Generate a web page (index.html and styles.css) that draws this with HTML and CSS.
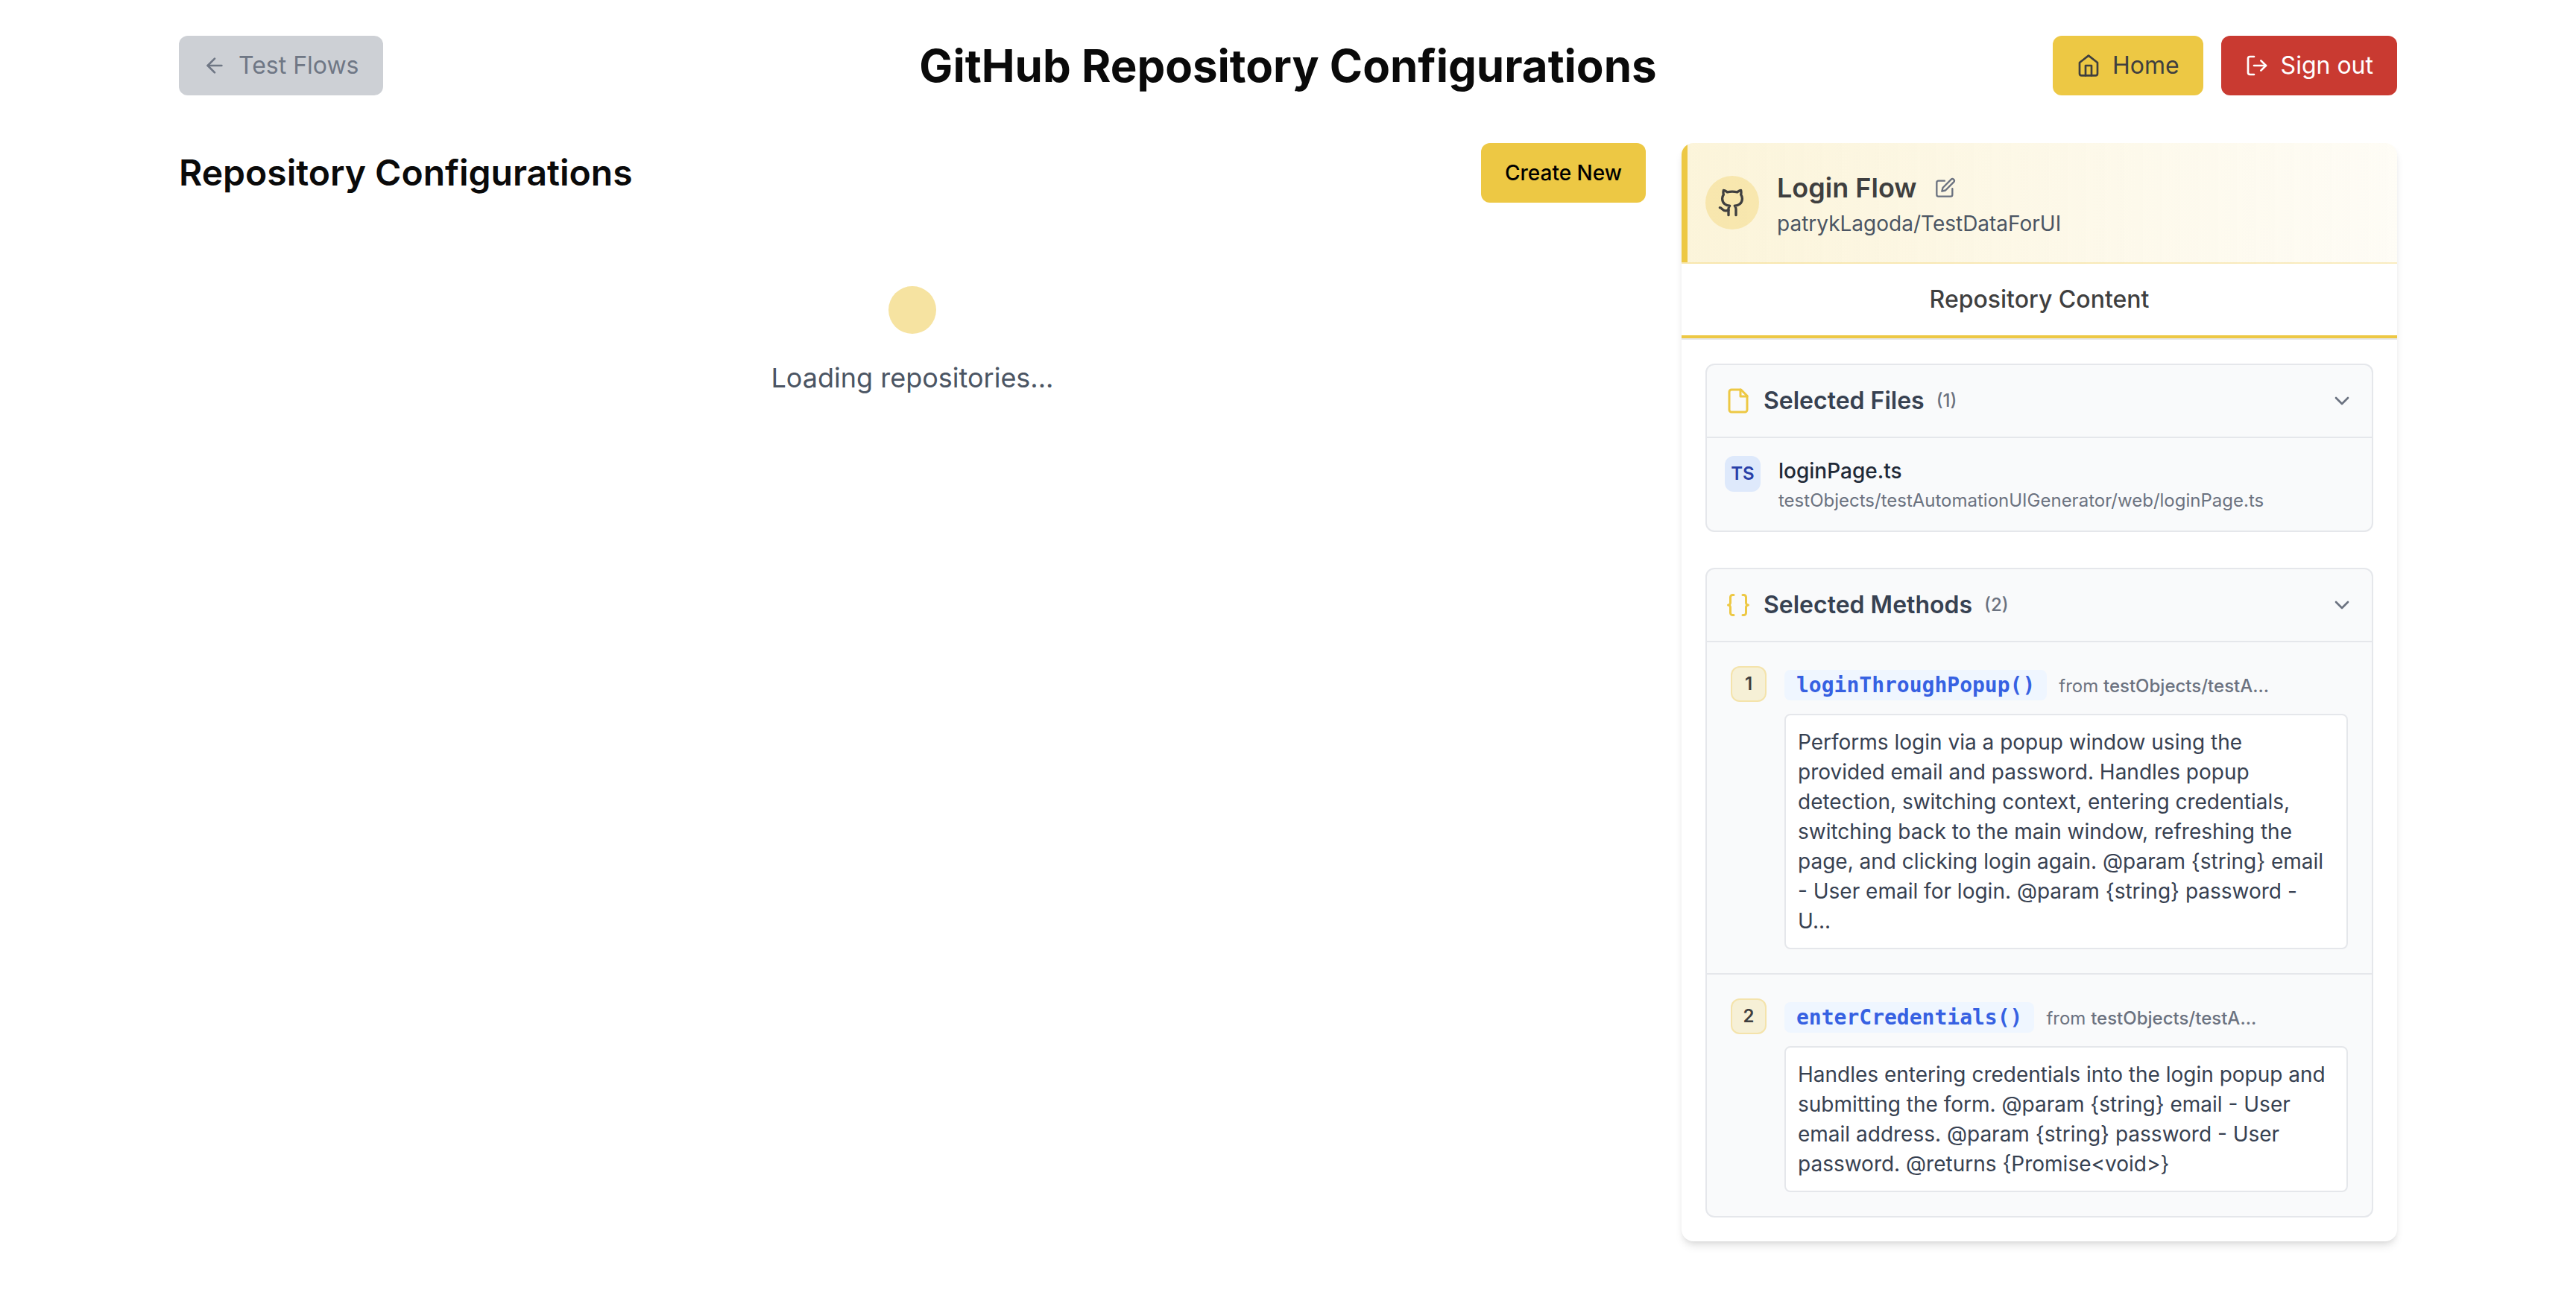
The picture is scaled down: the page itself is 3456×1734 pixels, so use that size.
FILE: index.html
```html
<!DOCTYPE html>
<html lang="en">
<head>
<meta charset="utf-8">
<meta name="viewport" content="width=device-width, initial-scale=1">
<title>GitHub Repository Configurations</title>
<link rel="stylesheet" href="styles.css">
</head>
<body>
<div class="page">
  <header class="topbar">
    <div class="topbar-side">
      <button class="btn btn-muted" type="button">
        <svg class="icon" viewBox="0 0 24 24" aria-hidden="true"><path d="m12 19-7-7 7-7"/><path d="M19 12H5"/></svg>
        Test Flows
      </button>
    </div>
    <h1 class="page-title">GitHub Repository Configurations</h1>
    <nav class="topbar-side topbar-end">
      <button class="btn btn-primary" type="button">
        <svg class="icon" viewBox="0 0 24 24" aria-hidden="true"><path d="m3 9 9-7 9 7v11a2 2 0 0 1-2 2H5a2 2 0 0 1-2-2z"/><path d="M9 22V12h6v10"/></svg>
        Home
      </button>
      <button class="btn btn-danger" type="button">
        <svg class="icon" viewBox="0 0 24 24" aria-hidden="true"><path d="M9 21H5a2 2 0 0 1-2-2V5a2 2 0 0 1 2-2h4"/><path d="m16 17 5-5-5-5"/><path d="M21 12H9"/></svg>
        Sign out
      </button>
    </nav>
  </header>

  <div class="columns">
    <main class="main">
      <div class="section-head">
        <h2 class="section-title">Repository Configurations</h2>
        <button class="btn btn-create" type="button">Create New</button>
      </div>
      <div class="loading" role="status">
        <span class="loading-dot"></span>
        <p class="loading-text">Loading repositories...</p>
      </div>
    </main>

    <aside class="panel">
      <div class="panel-head">
        <div class="panel-head-inner">
          <span class="avatar">
            <svg class="icon icon-xl" viewBox="0 0 24 24" aria-hidden="true"><path d="M15 22v-4a4.8 4.8 0 0 0-1-3.500c3 0 6-2 6-5.500.08-1.250-.27-2.480-1-3.500.28-1.150.28-2.350 0-3.500 0 0-1 0-3 1.500-2.640-.5-5.360-.5-8 0C6 2 5 2 5 2c-.3 1.150-.3 2.350 0 3.500A5.403 5.403 0 0 0 4 9c0 3.500 3 5.500 6 5.500-.39.49-.68 1.050-.85 1.650-.17.6-.22 1.230-.15 1.850v4"/><path d="M9 18c-4.510 2-5-2-7-2"/></svg>
          </span>
          <div>
            <div class="flow-line">
              <h3 class="flow-name">Login Flow</h3>
              <button class="icon-btn" type="button" aria-label="Edit name">
                <svg class="icon icon-sm" viewBox="0 0 24 24" aria-hidden="true"><path d="M11 4H4a2 2 0 0 0-2 2v14a2 2 0 0 0 2 2h14a2 2 0 0 0 2-2v-7"/><path d="M18.500 2.500a2.121 2.121 0 0 1 3 3L12 15l-4 1 1-4 9.500-9.500z"/></svg>
              </button>
            </div>
            <p class="repo-name">patrykLagoda/TestDataForUI</p>
          </div>
        </div>
      </div>

      <div class="tabs">
        <button class="tab" type="button">Repository Content</button>
      </div>

      <div class="panel-body">
        <section class="card">
          <button class="card-head" type="button" aria-expanded="true">
            <svg class="icon icon-lg accent" viewBox="0 0 24 24" aria-hidden="true"><path d="M14.500 2H6a2 2 0 0 0-2 2v16a2 2 0 0 0 2 2h12a2 2 0 0 0 2-2V7.500L14.500 2z"/><path d="M14 2v6h6"/></svg>
            <span class="card-title">Selected Files</span>
            <span class="card-count">(1)</span>
            <svg class="icon chevron" viewBox="0 0 24 24" aria-hidden="true"><path d="m6 9 6 6 6-6"/></svg>
          </button>
          <div class="file">
            <span class="file-type">TS</span>
            <div>
              <p class="file-name">loginPage.ts</p>
              <p class="file-path">testObjects/testAutomationUIGenerator/web/loginPage.ts</p>
            </div>
          </div>
        </section>

        <section class="card">
          <button class="card-head" type="button" aria-expanded="true">
            <svg class="icon icon-lg accent" viewBox="0 0 24 24" aria-hidden="true"><path d="M8 3H7a2 2 0 0 0-2 2v5a2 2 0 0 1-2 2 2 2 0 0 1 2 2v5c0 1.100.9 2 2 2h1"/><path d="M16 21h1a2 2 0 0 0 2-2v-5c0-1.100.9-2 2-2a2 2 0 0 1-2-2V5a2 2 0 0 0-2-2h-1"/></svg>
            <span class="card-title">Selected Methods</span>
            <span class="card-count">(2)</span>
            <svg class="icon chevron" viewBox="0 0 24 24" aria-hidden="true"><path d="m6 9 6 6 6-6"/></svg>
          </button>
          <div class="method">
            <span class="method-index">1</span>
            <div class="method-main">
              <p class="method-line"><code class="method-name">loginThroughPopup()</code><span class="method-source">from <b>testObjects/testA...</b></span></p>
              <p class="method-text">Performs login via a popup window using the provided email and password. Handles popup detection, switching context, entering credentials, switching back to the main window, refreshing the page, and clicking login again. @param {string} email - User email for login. @param {string} password - U...</p>
            </div>
          </div>
          <div class="method">
            <span class="method-index">2</span>
            <div class="method-main">
              <p class="method-line"><code class="method-name">enterCredentials()</code><span class="method-source">from <b>testObjects/testA...</b></span></p>
              <p class="method-text">Handles entering credentials into the login popup and submitting the form. @param {string} email - User email address. @param {string} password - User password. @returns {Promise&lt;void&gt;}</p>
            </div>
          </div>
        </section>
      </div>
    </aside>
  </div>
</div>
</body>
</html>
```
FILE: styles.css
```css
:root {
  --yellow: #edc844;
  --yellow-50: #f6e3a1;
  --ink: #3f3f3f;
  --line: #e5e7eb;
  --gray-500: #6b7280;
  --gray-600: #4b5563;
  --gray-700: #374151;
}

* {
  box-sizing: border-box;
}

body {
  margin: 0;
  background: #fff;
  color: #0a0a0a;
  font-family: Inter, "Liberation Sans", sans-serif;
  font-size: 32px;
  line-height: 48px;
}

h1, h2, h3, p {
  margin: 0;
}

button {
  margin: 0;
  border: 0;
  background: none;
  color: inherit;
  font: inherit;
  cursor: pointer;
}

.page {
  max-width: 3072px;
  margin: 0 auto;
  padding: 48px;
}

/* Icons */
.icon {
  flex: none;
  width: 32px;
  height: 32px;
  fill: none;
  stroke: currentColor;
  stroke-width: 2;
  stroke-linecap: round;
  stroke-linejoin: round;
}

.icon-sm {
  width: 28px;
  height: 28px;
}

.icon-lg {
  width: 36px;
  height: 36px;
}

.icon-xl {
  width: 40px;
  height: 40px;
}

.accent {
  color: var(--yellow);
}

/* Top bar */
.topbar {
  display: grid;
  grid-template-columns: 1fr auto 1fr;
  align-items: center;
  margin-bottom: 64px;
}

.topbar-side {
  display: flex;
  gap: 24px;
}

.topbar-end {
  justify-content: flex-end;
}

.page-title {
  font-size: 60px;
  line-height: 72px;
  font-weight: 700;
}

.btn {
  display: flex;
  align-items: center;
  gap: 16px;
  padding: 16px 32px;
  border-radius: 12px;
}

.btn-muted {
  background: #cdd0d5;
  color: #6f7785;
}

.btn-primary {
  background: var(--yellow);
  color: var(--ink);
}

.btn-danger {
  background: #c93a31;
  color: #fff;
}

.btn-create {
  padding: 20px 32px;
  background: var(--yellow);
  color: #000;
  font-size: 28px;
  line-height: 40px;
  font-weight: 500;
}

/* Columns */
.columns {
  display: grid;
  grid-template-columns: repeat(3, minmax(0, 1fr));
  align-items: start;
  gap: 48px;
}

.main {
  grid-column: span 2;
}

.section-head {
  display: flex;
  align-items: center;
  justify-content: space-between;
  margin-bottom: 48px;
}

.section-title {
  font-size: 48px;
  line-height: 64px;
  font-weight: 600;
}

.loading {
  display: flex;
  flex-direction: column;
  align-items: center;
  gap: 32px;
  padding: 64px 0;
}

.loading-dot {
  width: 64px;
  height: 64px;
  border-radius: 50%;
  background: var(--yellow-50);
}

.loading-text {
  color: var(--gray-600);
  font-size: 36px;
  line-height: 54px;
}

/* Side panel */
.panel {
  overflow: hidden;
  border-radius: 16px;
  background: #fff;
  box-shadow: 0 8px 12px -2px rgba(0, 0, 0, 0.1), 0 4px 8px -4px rgba(0, 0, 0, 0.1);
}

.panel-head {
  border-bottom: 2px solid rgba(237, 200, 68, 0.3);
  background: linear-gradient(to right, rgba(237, 200, 68, 0.2), rgba(237, 200, 68, 0.05));
}

.panel-head-inner {
  display: flex;
  align-items: center;
  gap: 24px;
  padding: 32px 32px 32px 24px;
  border-left: 8px solid var(--yellow);
}

.avatar {
  display: flex;
  flex: none;
  align-items: center;
  justify-content: center;
  width: 72px;
  height: 72px;
  border-radius: 50%;
  background: rgba(237, 200, 68, 0.3);
  color: var(--ink);
}

.flow-line {
  display: flex;
  align-items: center;
  gap: 16px;
}

.flow-name {
  color: var(--ink);
  font-size: 36px;
  line-height: 56px;
  font-weight: 600;
}

.icon-btn {
  display: flex;
  padding: 8px;
  color: var(--gray-500);
}

.repo-name {
  color: var(--gray-600);
  font-size: 28px;
  line-height: 40px;
}

.tabs {
  display: flex;
  border-bottom: 2px solid var(--line);
}

.tab {
  flex: 1;
  padding: 24px 32px;
  border-bottom: 4px solid var(--yellow);
  color: var(--ink);
  font-weight: 500;
}

.panel-body {
  display: flex;
  flex-direction: column;
  gap: 48px;
  padding: 32px;
}

/* Cards */
.card {
  overflow: hidden;
  border: 2px solid var(--line);
  border-radius: 12px;
  background: #f9fafb;
}

.card-head {
  display: flex;
  align-items: center;
  gap: 16px;
  width: 100%;
  padding: 24px;
}

.card-title {
  color: var(--gray-700);
  font-weight: 600;
}

.card-count {
  color: var(--gray-500);
  font-size: 24px;
  line-height: 32px;
  font-weight: 500;
}

.chevron {
  margin-left: auto;
  color: var(--gray-500);
}

.file {
  display: flex;
  gap: 24px;
  padding: 24px;
  border-top: 2px solid var(--line);
}

.file-type {
  flex: none;
  width: 48px;
  height: 48px;
  border-radius: 12px;
  background: #dee9fb;
  color: #2840a8;
  font-size: 24px;
  font-weight: 600;
  text-align: center;
}

.file-name {
  margin-bottom: 4px;
  color: #1f2937;
  font-size: 28px;
  line-height: 40px;
  font-weight: 500;
}

.file-path {
  color: var(--gray-500);
  font-size: 24px;
  line-height: 32px;
}

.method {
  display: flex;
  gap: 24px;
  padding: 32px;
  border-top: 2px solid var(--line);
}

.method-index {
  flex: none;
  width: 48px;
  height: 48px;
  border: 2px solid rgba(237, 200, 68, 0.3);
  border-radius: 12px;
  background: rgba(237, 200, 68, 0.2);
  color: var(--ink);
  font-size: 24px;
  line-height: 44px;
  font-weight: 600;
  text-align: center;
}

.method-main {
  flex: 1;
  min-width: 0;
}

.method-line {
  margin-bottom: 16px;
}

.method-name {
  padding: 4px 16px;
  border-radius: 8px;
  background: #eff6ff;
  color: #3661e2;
  font-family: "DejaVu Sans Mono", monospace;
  font-size: 28px;
  line-height: 40px;
  font-weight: 700;
}

.method-source {
  margin-left: 16px;
  color: var(--gray-500);
  font-size: 24px;
  line-height: 32px;
}

.method-source b {
  font-weight: 500;
}

.method-text {
  padding: 16px;
  border: 2px solid var(--line);
  border-radius: 8px;
  background: #fff;
  color: var(--gray-700);
  font-size: 28px;
  line-height: 40px;
}
```
